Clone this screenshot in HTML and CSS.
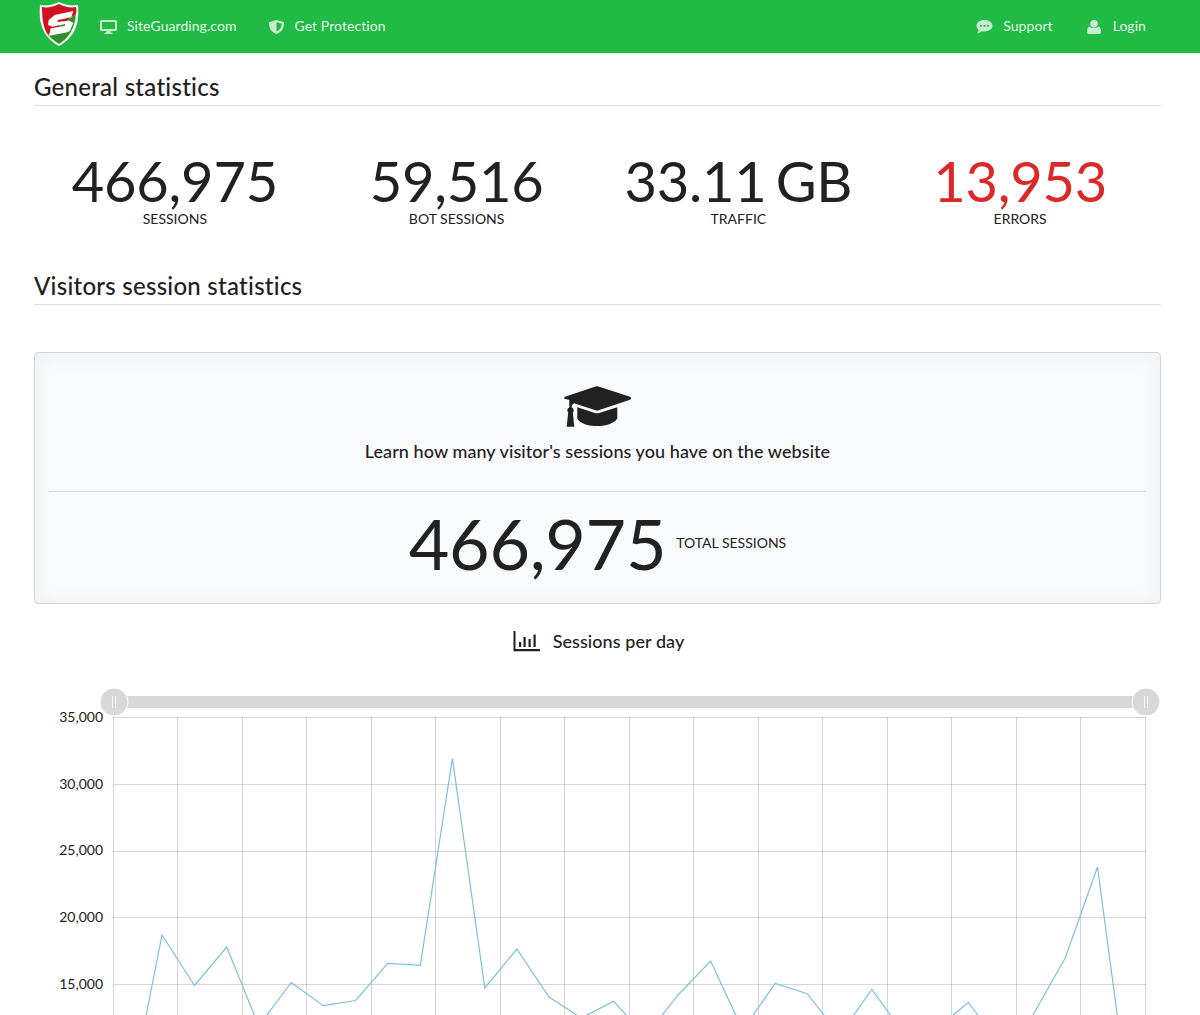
FILE: index.html
```html
<!DOCTYPE html>
<html lang="en">
<head>
    <meta charset="UTF-8">
    <meta name="viewport" content="width=device-width, initial-scale=1.0">
    <title>SiteGuarding - Statistics</title>
    <link rel="stylesheet" href="styles.css">
</head>
<body>
<nav class="topbar">
    <a class="logo" href="#">
        <svg width="40" height="45" viewBox="0 0 40 45">
            <path d="M20 0 C26 3 32 4 39 3 C40 18 39 33 20 44 C1 33 0 18 1 3 C8 4 14 3 20 0 Z" fill="#fff"/>
            <path d="M20 2 C26 5 32 6 37 5 C37.500 8 37.500 10 37 12 L9 33 C4 26 3 15 3 5 C8 6 14 5 20 2 Z" fill="#cf1322"/>
            <path d="M37 12 C36 26 30 36 20 42 C15 39 12 36 9 33 Z" fill="#338f2e"/>
            <path d="M15.700 13 L34.300 9 L32.300 15.300 L19 18 L18.300 20 L30 18.700 L34.300 20.700 L31 28.700 L28.300 30.300 L10 33.700 L11.700 26.300 L25.700 24 L26.300 22 L13.300 24.700 L9 23 L9.700 18 Z" fill="#fff"/>
        </svg>
    </a>
    <a class="nav-item first" href="#">
        <svg class="nav-icon" viewBox="0 0 17 14">
            <path fill-rule="evenodd" d="M1.500 0 H15.500 A1.500 1.500 0 0 1 17 1.500 V9.500 A1.500 1.500 0 0 1 15.500 11 H10.500 L11 12.800 H12.500 V14 H4.500 V12.800 H6 L6.500 11 H1.500 A1.500 1.500 0 0 1 0 9.500 V1.500 A1.500 1.500 0 0 1 1.500 0 Z M2 2 V9 H15 V2 Z"/>
        </svg>
        SiteGuarding.com
    </a>
    <a class="nav-item protect" href="#">
        <svg class="nav-icon" viewBox="0 0 17 14">
            <path d="M8.500 0 L16 2.300 C16 8 14.500 11.800 8.500 14 C2.500 11.800 1 8 1 2.300 Z M8.500 2.300 V11.600 C11.500 10 13.700 7.500 13.900 3.800 Z" fill-rule="evenodd"/>
        </svg>
        Get Protection
    </a>
    <div class="topbar-right">
        <a class="nav-item" href="#">
            <svg class="nav-icon" viewBox="0 0 17 14">
                <path fill-rule="evenodd" d="M8.500 0 C13 0 16.500 2.500 16.500 5.800 C16.500 9 13 11.500 8.500 11.500 C7.500 11.500 6.700 11.400 5.800 11.200 C4.500 12.400 2.800 13.300 0.800 13.500 C1.800 12.400 2.600 11.200 2.700 10 C1.200 9 0.500 7.500 0.500 5.800 C0.500 2.500 4 0 8.500 0 Z M5 4.700 A1.100 1.100 0 1 0 5 6.900 A1.100 1.100 0 1 0 5 4.700 Z M8.500 4.700 A1.100 1.100 0 1 0 8.500 6.900 A1.100 1.100 0 1 0 8.500 4.700 Z M12 4.700 A1.100 1.100 0 1 0 12 6.900 A1.100 1.100 0 1 0 12 4.700 Z"/>
            </svg>
            Support
        </a>
        <a class="nav-item" href="#">
            <svg class="nav-icon" viewBox="0 0 17 15">
                <circle cx="8" cy="4" r="4"/>
                <path d="M3.500 7 C5 9.200 11 9.200 12.500 7 C14.500 7.500 15.300 9 15.300 11 V13.500 C15.300 14.500 14.500 15 13.500 15 H2.500 C1.500 15 0.700 14.500 0.700 13.500 V11 C0.700 9 1.500 7.500 3.500 7 Z"/>
            </svg>
            Login
        </a>
    </div>
</nav>

<main class="content">
    <h3 class="section-title">General statistics</h3>
    <div class="stats">
        <div class="stat">
            <div class="stat-value">466,975</div>
            <div class="stat-label">Sessions</div>
        </div>
        <div class="stat">
            <div class="stat-value">59,516</div>
            <div class="stat-label">Bot sessions</div>
        </div>
        <div class="stat">
            <div class="stat-value">33.11 GB</div>
            <div class="stat-label">Traffic</div>
        </div>
        <div class="stat">
            <div class="stat-value red">13,953</div>
            <div class="stat-label">Errors</div>
        </div>
    </div>

    <h3 class="section-title second">Visitors session statistics</h3>

    <div class="panel">
        <svg class="cap-icon" width="68" height="41" viewBox="0 0 68 41">
            <path d="M31.500 0.400 Q33 0 34.500 0.400 L66 10.800 Q68 12.300 66 13.800 L34.500 24.300 Q33 24.700 31.500 24.300 L10 17.200 C8 19 7 20 7 21 L7 14.300 L1 13 Q-1 12.300 1 10.800 Z"/>
            <path d="M13.300 21.300 L31 27 Q33 27.700 35 27 L53.300 21.300 V32.400 C50 38 40 40 33 40 C26 40 16 38 13.300 32.400 Z"/>
            <path d="M5.300 14 H7.700 V21.500 A3 3 0 0 1 8.800 26.500 L10.300 40.700 H2.700 L4.200 26.500 A3 3 0 0 1 5.300 21.500 Z"/>
        </svg>
        <div class="panel-text">Learn how many visitor's sessions you have on the website</div>
        <div class="panel-divider"></div>
        <div class="panel-total">
            <div class="total-value">466,975</div>
            <div class="stat-label">Total sessions</div>
        </div>
    </div>

    <div class="chart-title">
        <svg width="28" height="21" viewBox="0 0 28 21">
            <path d="M0.500 0 H2.500 V18 H27 V20.200 H0.500 Z"/>
            <path d="M6 11 H8.200 V16 H6 Z M10.500 6 H12.700 V16 H10.500 Z M15.500 8 H17.700 V16 H15.500 Z M20.500 3.500 H22.700 V16 H20.500 Z"/>
        </svg>
        Sessions per day
    </div>

    <svg class="chart" width="1127" height="327" viewBox="34 688 1127 327">
        <rect class="slider-track" x="126" y="696" width="1008" height="12"/>
        <g class="slider-handle">
            <circle cx="114" cy="702" r="14"/>
            <path d="M112.500 696 V708 M115.500 696 V708"/>
        </g>
        <g class="slider-handle">
            <circle cx="1146" cy="702" r="14"/>
            <path d="M1144.500 696 V708 M1147.500 696 V708"/>
        </g>

        <path class="grid" d="M113.500 717 V1015 M177.500 717 V1015 M242.500 717 V1015 M306.500 717 V1015 M371.500 717 V1015 M435.500 717 V1015 M500.500 717 V1015 M564.500 717 V1015 M629.500 717 V1015 M693.500 717 V1015 M758.500 717 V1015 M822.500 717 V1015 M887.500 717 V1015 M951.500 717 V1015 M1016.500 717 V1015 M1080.500 717 V1015 M1145.500 717 V1015"/>
        <path class="grid" d="M113 717.500 H1146 M113 784.500 H1146 M113 851.500 H1146 M113 917.500 H1146 M113 984.500 H1146"/>

        <text class="axis" x="103" y="722">35,000</text>
        <text class="axis" x="103" y="789">30,000</text>
        <text class="axis" x="103" y="855">25,000</text>
        <text class="axis" x="103" y="922">20,000</text>
        <text class="axis" x="103" y="989">15,000</text>

        <polyline class="series" points="130,1097 162,935 194.500,985.500 226.700,947 258.800,1026 291.200,982.500 323.300,1005.700 355.600,1000.500 387.800,963.300 420.300,965.300 452.400,758.500 484.800,988 516.900,949 549,997 581.300,1018 613.600,1001.300 645.800,1036 678,995 710.600,961 742.700,1030 775.200,983.500 807.300,993.700 839.500,1035 871.900,989.500 904,1034 936,1029 968.300,1002.500 1000.600,1045 1033,1015 1065.200,958 1097.500,867 1130,1111"/>
    </svg>
</main>
</body>
</html>
```

FILE: styles.css
```css
body {
    font-family: Lato, "Open Sans", sans-serif;
    font-size: 14px;
    line-height: 18px;
    font-variant-ligatures: none;
    margin: 0;
    color: #212121;
    background-color: #fff;
}
a {
    color: inherit;
    text-decoration: none;
}
.topbar {
    display: flex;
    align-items: center;
    box-sizing: border-box;
    height: 53px;
    padding: 0 54px 2px 39px;
    background-color: #21ba45;
    color: rgba(255,255,255,0.9);
    letter-spacing: 0.06px;
}
.logo {
    display: flex;
    align-self: flex-start;
    margin-top: 2px;
    margin-right: 21px;
}
.nav-item {
    display: flex;
    align-items: center;
    margin-right: 33px;
}
.nav-item.first {
    margin-right: 32px;
}
.nav-icon {
    width: 17px;
    height: 14px;
    margin-top: 2px;
    margin-right: 10px;
    fill: #c8eed1;
}
.protect .nav-icon {
    margin-right: 9px;
}
.topbar-right {
    display: flex;
    margin-left: auto;
}
.topbar-right .nav-item:last-child {
    margin-right: 0;
}
.content {
    padding: 0 39px 0 34px;
}
.section-title {
    margin: 18px 0 0;
    padding-bottom: 3px;
    font-size: 24px;
    line-height: 31px;
    font-weight: 500;
    letter-spacing: 0.26px;
    border-bottom: 1px solid #dedede;
}
.section-title.second {
    margin-top: 42px;
}
.stats {
    display: flex;
    margin-top: 47px;
}
.stat {
    flex: 1;
    text-align: center;
}
.stat-value {
    margin-bottom: 1px;
    font-size: 56px;
    line-height: 56px;
    letter-spacing: -0.2px;
    word-spacing: -5px;
}
.red {
    color: #db2828;
}
.stat-label {
    text-transform: uppercase;
}
.panel {
    display: flex;
    flex-direction: column;
    align-items: center;
    height: 252px;
    box-sizing: border-box;
    margin-top: 47px;
    padding: 33px 14px 0;
    background-color: #f9fafb;
    border: 1px solid #d4d4d5;
    border-radius: 4px;
    box-shadow: 0 2px 25px 0 rgba(34,36,38,0.05) inset;
}
.cap-icon {
    fill: #212121;
}
.panel-text {
    margin-top: 13px;
    font-size: 18px;
    line-height: 23px;
    font-weight: 500;
    letter-spacing: 0.07px;
}
.panel-divider {
    align-self: stretch;
    margin-top: 28px;
    border-top: 1px solid #d9d9da;
}
.panel-total {
    display: flex;
    align-items: center;
    gap: 10px;
    margin-top: 16px;
}
.total-value {
    font-size: 70px;
    line-height: 70px;
    letter-spacing: -0.3px;
}
.chart-title {
    display: flex;
    align-items: center;
    justify-content: center;
    gap: 12px;
    box-sizing: border-box;
    margin-top: 26px;
    height: 23px;
    padding: 0 0 2px 2px;
    font-size: 18px;
    font-weight: 500;
    letter-spacing: 0.07px;
}
.chart-title svg {
    margin-top: 2px;
    fill: #212121;
}
.chart {
    display: block;
    margin-top: 35px;
}
.slider-track {
    fill: #d8d8d8;
}
.slider-handle circle {
    fill: #d8d8d8;
    stroke: #fff;
    stroke-width: 1;
}
.slider-handle path {
    fill: none;
    stroke: #f4f4f4;
    stroke-width: 1;
}
.grid {
    fill: none;
    stroke: rgba(0,0,0,0.16);
    stroke-width: 1;
}
.axis {
    font-size: 14px;
    text-anchor: end;
    fill: #212121;
}
.series {
    fill: none;
    stroke: #7cc0e0;
    stroke-width: 1.2;
}
```
